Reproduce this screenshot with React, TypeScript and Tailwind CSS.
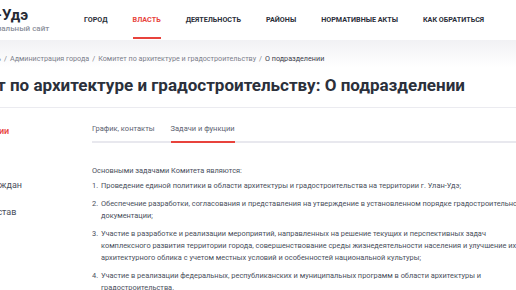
import React from "react";

const nav = ["Город", "Власть", "Деятельность", "Районы", "Нормативные акты", "Как обратиться"];

const side = [
  { label: "О подразделении", active: true },
  { label: "Документы", active: false },
  { label: "Обращения граждан", active: false },
  { label: "Структура и состав", active: false },
];

const tasks: React.ReactNode[] = [
  "Проведение единой политики в области архитектуры и градостроительства на территории г. Улан-Удэ;",
  "Обеспечение разработки, согласования и представления на утверждение в установленном порядке градостроительной документации;",
  <>
    Участие в разработке и реализации мероприятий, направленных на решение текущих и перспективных задач
    <br />
    комплексного развития территории города, совершенствование среды жизнедеятельности населения и улучшение их
    архитектурного облика с учетом местных условий и особенностей национальной культуры;
  </>,
  "Участие в реализации федеральных, республиканских и муниципальных программ в области архитектуры и градостроительства.",
];

export default function App() {
  return (
    <div className="w-[516px] h-[290px] overflow-hidden bg-white font-['Roboto',sans-serif] text-[#2b2f3a]">
      {/* Header */}
      <header className="h-[40px] flex items-center whitespace-nowrap">
        <div className="w-[84px] shrink-0 flex flex-col leading-none">
          <span className="ml-[-38px] text-[15px] font-bold text-[#252a35]">Улан-Удэ</span>
          <span className="ml-[-24px] mt-[2px] text-[8px] font-medium text-[#8b909b]">Официальный сайт</span>
        </div>
        <nav className="flex gap-[25px] h-full">
          {nav.map((n) => (
            <div key={n} className="relative h-full flex items-center">
              <span className={`text-[7.2px] font-bold uppercase ${n === "Власть" ? "text-[#e8433c]" : "text-[#2b2f3a]"}`}>{n}</span>
              {n === "Власть" && <div className="absolute left-0 right-0 bottom-[1px] h-[2px] bg-[#e8433c]" />}
            </div>
          ))}
        </nav>
      </header>

      {/* Breadcrumbs */}
      <div className="h-[27px] bg-gradient-to-b from-[#f1f1f4] to-white flex items-end pb-[2px] whitespace-nowrap">
        <div className="ml-[-59px] text-[7.2px] text-[#7b808b] flex gap-[3px]">
          <span>Главная</span><span>/</span><span>Власть</span><span>/</span>
          <span>Администрация города</span><span>/</span>
          <span>Комитет по архитектуре и градостроительству</span><span>/</span>
          <span className="text-[#3b404b]">О подразделении</span>
        </div>
      </div>

      {/* Title */}
      <h1 className="mt-[8px] ml-[-63px] whitespace-nowrap text-[17px] leading-[20px] font-bold text-[#2b303b]">
        Комитет по архитектуре и градостроительству: О подразделении
      </h1>
      <div className="mt-[12px] h-[1px] bg-[#ebebf0]" />

      {/* Body */}
      <div className="flex">
        <aside className="w-[92px] shrink-0 whitespace-nowrap">
          <ul className="ml-[-65px] pt-[17px] flex flex-col gap-[14px] text-[9px] leading-[13px] text-[#4a4f5c]">
            {side.map((s) => (
              <li key={s.label} className={s.active ? "text-[#e8433c] font-medium" : ""}>{s.label}</li>
            ))}
          </ul>
        </aside>
        <main className="flex-1 min-w-0">
          <div className="mt-[15px] flex gap-[16px] border-b-2 border-[#e8e8ee] text-[7.5px] text-[#5c6270] whitespace-nowrap">
            <span className="pb-[7px]">График, контакты</span>
            <span className="pb-[7px] relative">
              Задачи и функции
              <span className="absolute left-0 right-0 bottom-[-2px] h-[2px] bg-[#e8433c]" />
            </span>
          </div>
          <div className="w-[441px] mt-[22px] text-[7.4px] leading-[12px] text-[#4a4f5c]">
            <p>Основными задачами Комитета являются:</p>
            <ol className="mt-[3px] flex flex-col gap-[6px]">
              {tasks.map((t, i) => (
                <li key={i} className="flex">
                  <span className="w-[9px] shrink-0">{i + 1}.</span>
                  <span>{t}</span>
                </li>
              ))}
            </ol>
          </div>
        </main>
      </div>
    </div>
  );
}
